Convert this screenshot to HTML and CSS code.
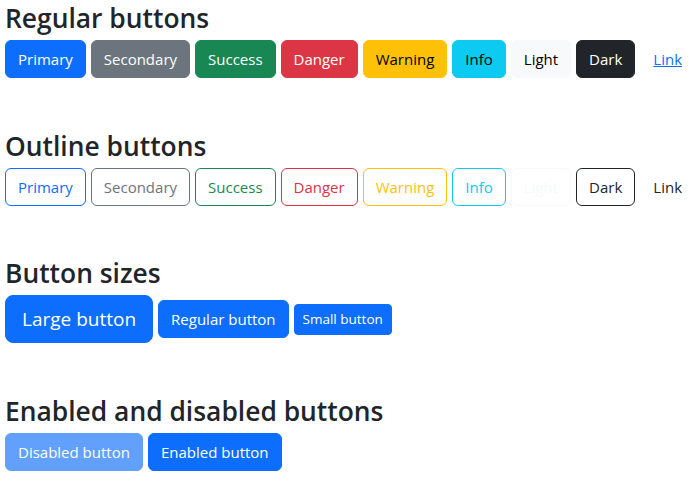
FILE: index.html
```html
<!DOCTYPE html>
<html lang="en">
<head>
<meta charset="utf-8">
<title>Buttons</title>
<link rel="stylesheet" href="styles.css">
</head>
<body>
<div class="page">
  <section class="section">
    <h2 class="title">Regular buttons</h2>
    <div class="row">
      <button class="btn btn-primary">Primary</button>
      <button class="btn btn-secondary">Secondary</button>
      <button class="btn btn-success">Success</button>
      <button class="btn btn-danger">Danger</button>
      <button class="btn btn-warning">Warning</button>
      <button class="btn btn-info">Info</button>
      <button class="btn btn-light">Light</button>
      <button class="btn btn-dark">Dark</button>
      <button class="btn btn-link">Link</button>
    </div>
  </section>
  <section class="section">
    <h2 class="title">Outline buttons</h2>
    <div class="row">
      <button class="btn o-primary">Primary</button>
      <button class="btn o-secondary">Secondary</button>
      <button class="btn o-success">Success</button>
      <button class="btn o-danger">Danger</button>
      <button class="btn o-warning">Warning</button>
      <button class="btn o-info">Info</button>
      <button class="btn o-light">Light</button>
      <button class="btn o-dark">Dark</button>
      <button class="btn o-link">Link</button>
    </div>
  </section>
  <section class="section">
    <h2 class="title">Button sizes</h2>
    <div class="row row-center">
      <button class="btn btn-primary btn-lg">Large button</button>
      <button class="btn btn-primary">Regular button</button>
      <button class="btn btn-primary btn-sm">Small button</button>
    </div>
  </section>
  <section class="section">
    <h2 class="title">Enabled and disabled buttons</h2>
    <div class="row">
      <button class="btn btn-primary" disabled>Disabled button</button>
      <button class="btn btn-primary">Enabled button</button>
    </div>
  </section>
</div>
</body>
</html>
```
FILE: styles.css
```css
* { box-sizing: border-box; }
body {
  margin: 0;
  background: #fff;
  color: #212529;
  font-family: "Open Sans", "Noto Sans", sans-serif;
  font-size: 15px;
}
.page { padding: 0 5px; }
.section { margin-bottom: 49.5px; }
.section:last-child { margin-bottom: 0; }
.title {
  margin: 0 0 4px;
  font-size: 26.4px;
  font-weight: 600;
  line-height: 36px;
  color: #212529;
}
.row { display: flex; gap: 5px; flex-wrap: nowrap; }
.row-center { align-items: center; }
.btn {
  font-family: inherit;
  font-size: 15px;
  line-height: 24px;
  padding: 6px 12px;
  border: 1px solid transparent;
  border-radius: 6px;
  background: transparent;
  color: #212529;
  white-space: nowrap;
  cursor: pointer;
}
.btn-lg { font-size: 19px; padding: 8px 16px; line-height: 30px; border-radius: 8px; }
.btn-sm { font-size: 13.5px; padding: 4px 8px; line-height: 21px; border-radius: 4px; }
.btn-primary { background: #0d6efd; border-color: #0d6efd; color: #fff; }
.btn-primary:disabled { opacity: .65; cursor: default; }
.btn-secondary { background: #6c757d; border-color: #6c757d; color: #fff; }
.btn-success { background: #198754; border-color: #198754; color: #fff; }
.btn-danger { background: #dc3545; border-color: #dc3545; color: #fff; }
.btn-warning { background: #ffc107; border-color: #ffc107; color: #000; }
.btn-info { background: #0dcaf0; border-color: #0dcaf0; color: #000; }
.btn-light { background: #f8f9fa; border-color: #f8f9fa; color: #000; }
.btn-dark { background: #212529; border-color: #212529; color: #fff; }
.btn-link { color: #0d6efd; text-decoration: underline; }
.o-primary { border-color: #0d6efd; color: #0d6efd; }
.o-secondary { border-color: #6c757d; color: #6c757d; }
.o-success { border-color: #198754; color: #198754; }
.o-danger { border-color: #dc3545; color: #dc3545; }
.o-warning { border-color: #ffc107; color: #ffc107; }
.o-info { border-color: #0dcaf0; color: #0dcaf0; }
.o-light { border-color: #f8f9fa; color: #f8f9fa; }
.o-dark { border-color: #212529; color: #212529; }
.o-link { color: #212529; }
```
